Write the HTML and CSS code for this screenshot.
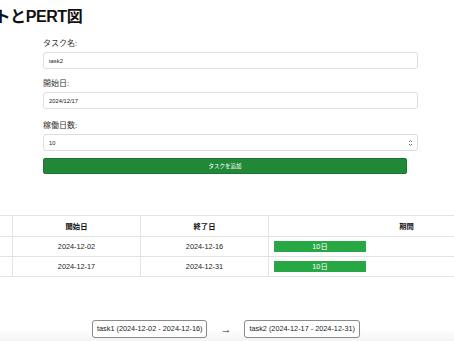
FILE: index.html
```html
<!DOCTYPE html>
<html lang="ja">
<head>
<meta charset="utf-8">
<title>ガントチャートとPERT図</title>
<link rel="stylesheet" href="styles.css">
</head>
<body>
<div class="page">
  <div class="sheet">
    <h1 class="title">ガントチャートとPERT図</h1>
    <form class="task-form">
      <div class="field">
        <label class="field-label">タスク名:</label>
        <input class="field-input" type="text" value="task2">
      </div>
      <div class="field">
        <label class="field-label">開始日:</label>
        <input class="field-input" type="text" value="2024/12/17">
      </div>
      <div class="field field-days">
        <label class="field-label">稼働日数:</label>
        <div class="input-wrap">
          <input class="field-input" type="text" value="10">
          <svg class="spinner" width="5" height="8" viewBox="0 0 5 8"><path d="M1 3 L2.5 1.5 L4 3 M1 5 L2.5 6.5 L4 5" fill="none" stroke="#666" stroke-width="0.9"/></svg>
        </div>
      </div>
      <button class="add-btn" type="button">タスクを追加</button>
    </form>
    <table class="gantt">
      <thead>
        <tr><th class="c1">タスク名</th><th class="c2">開始日</th><th class="c3">終了日</th><th class="c4">期間</th></tr>
      </thead>
      <tbody>
        <tr><td>task1</td><td>2024-12-02</td><td>2024-12-16</td><td class="bar-cell"><div class="bar" style="width:92px">10日</div></td></tr>
        <tr><td>task2</td><td>2024-12-17</td><td>2024-12-31</td><td class="bar-cell"><div class="bar" style="width:92px">10日</div></td></tr>
      </tbody>
    </table>
    <div class="pert">
      <div class="node">task1 (2024-12-02 - 2024-12-16)</div>
      <div class="arrow">→</div>
      <div class="node">task2 (2024-12-17 - 2024-12-31)</div>
    </div>
  </div>
</div>
</body>
</html>
```
FILE: styles.css
```css
html, body {
  margin: 0;
  padding: 0;
  background: #fff;
}
body {
  font-family: "Liberation Sans", "Noto Sans CJK JP", sans-serif;
  color: #222;
}
.page {
  width: 454px;
  height: 341px;
  overflow: hidden;
  position: relative;
  background: linear-gradient(to bottom, #fff 0, #fff 329px, #f4f4f4 341px);
}
.sheet {
  width: 662px;
  margin-left: -116px;
}
.title {
  margin: 0;
  padding: 7px 0 0 17px;
  font-size: 16px;
  line-height: 20px;
  font-weight: bold;
  color: #111;
  letter-spacing: -0.4px;
}
.task-form {
  margin: 12px 0 0 159px;
  width: 364px;
  display: flex;
  flex-direction: column;
}
.field {
  display: flex;
  flex-direction: column;
  gap: 3px;
  margin-bottom: 10px;
}
.field-days {
  margin-top: 2px;
  margin-bottom: 7px;
}
.field-label {
  display: block;
  font-size: 8px;
  line-height: 10px;
  color: #333;
}
.input-wrap {
  position: relative;
  height: 17px;
}
.field-input {
  display: block;
  box-sizing: border-box;
  width: 375px;
  height: 17px;
  margin: 0;
  padding: 0 5px;
  border: 1px solid #ddd;
  border-radius: 3px;
  font-family: "Liberation Sans", "Noto Sans CJK JP", sans-serif;
  font-size: 5.8px;
  color: #222;
  background: #fff;
  outline: none;
}
.spinner {
  position: absolute;
  left: 365px;
  top: 4.5px;
}
.add-btn {
  display: block;
  height: 16px;
  width: 364px;
  border: 1px solid #1c7430;
  border-radius: 2px;
  background: #218838;
  color: #fff;
  font-family: "Liberation Sans", "Noto Sans CJK JP", sans-serif;
  font-size: 5.5px;
  padding: 0;
}
.gantt {
  margin-top: 41px;
  width: 656px;
  border-collapse: collapse;
  table-layout: fixed;
  font-size: 7.3px;
}
.gantt th, .gantt td {
  border: 1px solid #e3e3e3;
  height: 19px;
  padding: 0 5px;
  text-align: center;
  color: #222;
}
.gantt th {
  height: 20px;
  font-weight: bold;
  color: #111;
}
.c1, .c2, .c3 { width: 117px; }
.c4 { width: 265px; }
.gantt td.bar-cell {
  text-align: left;
}
.bar {
  height: 11px;
  line-height: 11px;
  background: #28a745;
  color: #fff;
  text-align: center;
  font-size: 7.3px;
}
.pert {
  margin-top: 43px;
  display: flex;
  align-items: center;
  padding-left: 208px;
  gap: 13px;
}
.node {
  border: 1px solid #8a8a8a;
  border-radius: 3px;
  height: 16px;
  line-height: 16px;
  padding: 0 4px;
  font-size: 7.3px;
  color: #222;
  background: #fff;
  white-space: nowrap;
  box-shadow: 0 0 1px rgba(0,0,0,0.1);
}
.arrow {
  font-size: 11px;
  line-height: 16px;
  color: #222;
}
```
